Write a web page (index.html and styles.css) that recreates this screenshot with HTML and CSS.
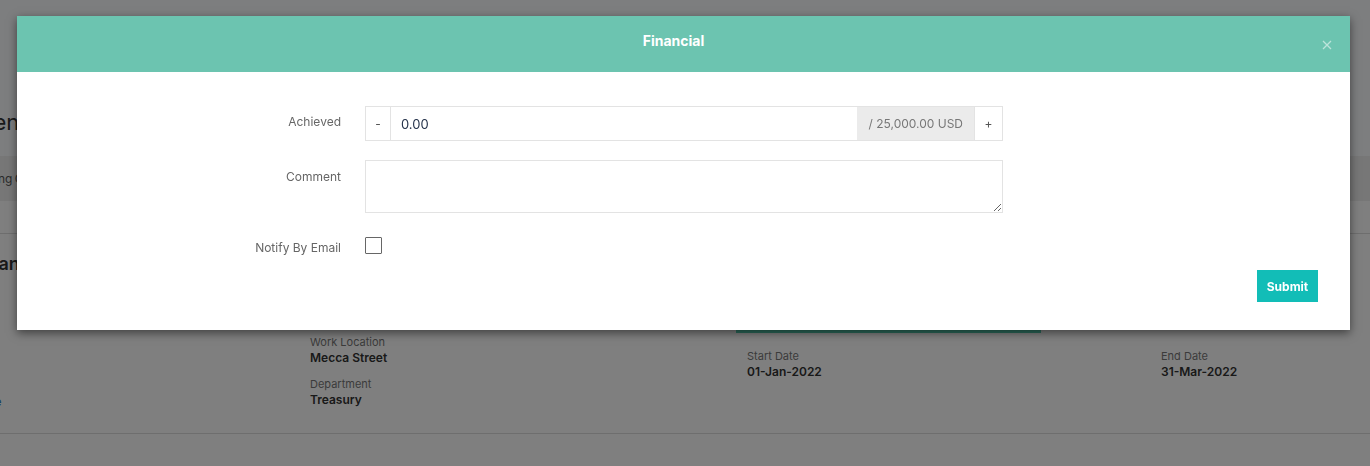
FILE: index.html
```html
<!DOCTYPE html>
<html lang="en">
<head>
	<meta charset="UTF-8">
	<title>Financial</title>
	<link rel="stylesheet" href="styles.css">
</head>
<body>
	<div class="page">
		<div class="page-head">
			<h1 class="page-title">Goal Assessment</h1>
		</div>
		<div class="tabs">
			<span class="tab">Pending Confirmation</span>
		</div>
		<div class="toolbar"></div>
		<div class="summary">
			<div class="who">
				<h2 class="who-name">Ahmed Khan</h2>
				<a class="who-link" href="#">View Profile</a>
			</div>
			<div class="info">
				<div class="field">
					<div class="field-label">Position</div>
					<div class="field-value">Treasury Officer</div>
				</div>
				<div class="field">
					<div class="field-label">Work Location</div>
					<div class="field-value">Mecca Street</div>
				</div>
				<div class="field">
					<div class="field-label">Department</div>
					<div class="field-value">Treasury</div>
				</div>
			</div>
			<div class="period">
				<div class="progress"></div>
				<div class="field">
					<div class="field-label">Start Date</div>
					<div class="field-value">01-Jan-2022</div>
				</div>
			</div>
			<div class="period-end">
				<div class="field">
					<div class="field-label">End Date</div>
					<div class="field-value">31-Mar-2022</div>
				</div>
			</div>
		</div>
	</div>

	<div class="overlay"></div>

	<div class="modal">
		<div class="modal-head">
			<div class="modal-title">Financial</div>
			<button class="modal-close" type="button">
				<svg width="10" height="10" viewBox="0 0 10 10"><path d="M1 1L9 9M9 1L1 9" stroke="currentColor" stroke-width="1.3" fill="none"/></svg>
			</button>
		</div>
		<div class="modal-body">
			<div class="form-row">
				<label class="form-label">Achieved</label>
				<div class="input-group">
					<button class="step" type="button">-</button>
					<input class="amount" type="text" value="0.00">
					<span class="addon">/ 25,000.00 USD</span>
					<button class="step step-plus" type="button">+</button>
				</div>
			</div>
			<div class="form-row">
				<label class="form-label form-label-top">Comment</label>
				<textarea class="comment"></textarea>
			</div>
			<div class="form-row">
				<label class="form-label form-label-check">Notify By Email</label>
				<input class="check" type="checkbox">
			</div>
			<div class="modal-foot">
				<button class="submit" type="button">Submit</button>
			</div>
		</div>
	</div>
</body>
</html>
```

FILE: styles.css
```css
*{
	margin: 0;
	padding: 0;
	box-sizing: border-box;
}
body{
	font-family: Inter, "Noto Sans", sans-serif;
	color: #333;
	background: #fff;
	overflow: hidden;
}
.page{
	width: 1370px;
	height: 466px;
	overflow: hidden;
}
.page-head{
	height: 156px;
	padding-top: 107px;
	background: #fbfcff;
}
.page-title{
	font-size: 22px;
	font-weight: 400;
	line-height: 30px;
	margin-left: -154px;
	color: #333;
	white-space: nowrap;
}
.tabs{
	height: 45px;
	background: #eee;
	line-height: 45px;
	font-size: 12px;
	color: #555;
}
.tab{
	display: inline-block;
	margin-left: -34px;
	word-spacing: -1px;
}
.toolbar{
	height: 33px;
	border-bottom: 1px solid #ddd;
}
.summary{
	display: flex;
	height: 200px;
	border-bottom: 1px solid #ddd;
}
.who{
	width: 310px;
	padding-top: 18px;
}
.who-name{
	font-size: 18px;
	font-weight: 600;
	line-height: 24px;
	margin-left: -92px;
	white-space: nowrap;
	color: #333;
}
.who-link{
	display: block;
	margin-top: 118px;
	margin-left: -66px;
	font-size: 12px;
	line-height: 16px;
	color: #2a7ab8;
	text-decoration: none;
	white-space: nowrap;
}
.info{
	width: 426px;
	padding-top: 58px;
}
.field{
	margin-bottom: 10px;
}
.field-label{
	font-size: 11px;
	line-height: 16px;
	color: #777;
}
.field-value{
	font-size: 12px;
	font-weight: 600;
	line-height: 16px;
	color: #333;
}
.period{
	width: 425px;
	padding-top: 79px;
}
.progress{
	width: 305px;
	height: 20px;
	background: #58d6b8;
	margin-bottom: 15px;
}
.period .field{
	padding-left: 11px;
}
.period-end{
	padding-top: 114px;
}
.overlay{
	position: fixed;
	top: 0;
	left: 0;
	right: 0;
	bottom: 0;
	background: rgba(0,0,0,0.5);
}
.modal{
	position: absolute;
	top: 16px;
	left: 17px;
	width: 1333px;
	height: 314px;
	background: #fff;
	box-shadow: 0 3px 9px rgba(0,0,0,0.5);
}
.modal-head{
	display: flex;
	align-items: center;
	height: 56px;
	padding: 0 15px 0 11px;
	background: #6cc4b0;
}
.modal-title{
	flex: 1;
	text-align: center;
	color: #fff;
	font-size: 14px;
	font-weight: 700;
	margin-top: -7px;
}
.modal-close{
	width: 16px;
	height: 16px;
	border: none;
	background: none;
	color: rgba(255,255,255,0.55);
	display: flex;
	align-items: center;
	justify-content: center;
	margin-top: 1px;
}
.modal-body{
	padding: 34px 32px 0 0;
}
.form-row{
	display: grid;
	grid-template-columns: 324px 638px;
	column-gap: 24px;
	margin-bottom: 19px;
}
.form-label{
	text-align: right;
	font-size: 12px;
	line-height: 16px;
	color: #666;
	padding-top: 8px;
}
.form-label-top{
	padding-top: 9px;
}
.form-label-check{
	padding-top: 8px;
}
.input-group{
	display: flex;
	height: 35px;
	border: 1px solid #e3e3e3;
}
.step{
	width: 25px;
	border: none;
	border-right: 1px solid #e3e3e3;
	background: #fff;
	font-family: inherit;
	font-size: 12px;
	color: #555;
}
.step-plus{
	width: 28px;
	border-right: none;
	border-left: 1px solid #e3e3e3;
}
.amount{
	flex: 1;
	border: none;
	outline: none;
	padding-left: 10px;
	font-family: inherit;
	font-size: 13px;
	color: #24324a;
}
.addon{
	display: flex;
	align-items: center;
	padding: 0 11px;
	background: #ebebeb;
	font-size: 12px;
	color: #777;
}
.comment{
	height: 53px;
	border: 1px solid #e3e3e3;
	resize: vertical;
	font-family: inherit;
	outline: none;
}
.check{
	appearance: none;
	-webkit-appearance: none;
	width: 17px;
	height: 17px;
	border: 1px solid #666;
	border-radius: 1px;
	background: #fff;
	margin-top: 5px;
}
.modal-foot{
	display: flex;
	justify-content: flex-end;
	margin-top: -5px;
}
.submit{
	width: 61px;
	height: 32px;
	border: none;
	background: #12bdb7;
	color: #fff;
	font-family: inherit;
	font-size: 12px;
	font-weight: 700;
}
```
